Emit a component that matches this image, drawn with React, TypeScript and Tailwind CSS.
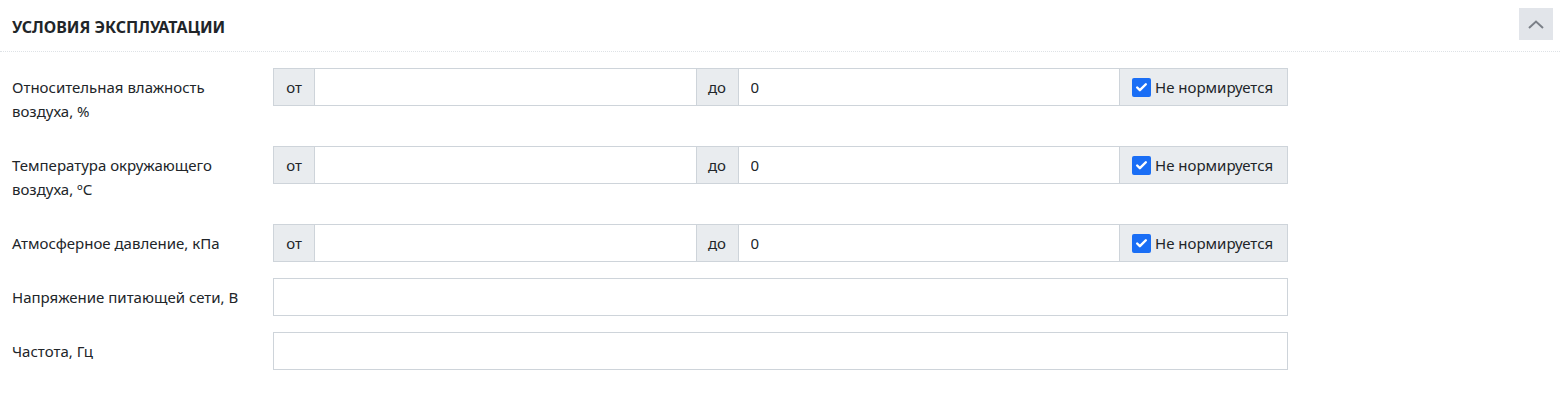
import { Check } from "lucide-react";

const font = { fontFamily: '"Segoe UI", "Noto Sans", "Open Sans", sans-serif' };

function Addon({ children, className = "" }: { children: React.ReactNode; className?: string }) {
  return (
    <div
      className={`flex items-center justify-center bg-[#e9ecef] border border-[#ced4da] text-[15px] text-[#212529] ${className}`}
    >
      {children}
    </div>
  );
}

function RangeGroup() {
  return (
    <div className="flex h-[38px] w-[1015px]">
      <Addon className="w-[42px]">от</Addon>
      <input
        className="flex-1 min-w-0 border-y border-[#ced4da] px-3 text-[15px] outline-none"
        defaultValue=""
      />
      <Addon className="w-[43px]">до</Addon>
      <input
        className="flex-1 min-w-0 border-y border-[#ced4da] px-3 text-[15px] text-[#212529] outline-none"
        defaultValue="0"
      />
      <Addon className="w-[169px] justify-start pl-3 gap-1">
        <span className="flex h-[19px] w-[19px] items-center justify-center rounded-[2px] bg-[#1a6ef5]">
          <Check size={13} strokeWidth={4.5} className="text-white" />
        </span>
        Не нормируется
      </Addon>
    </div>
  );
}

function Row({ label, children }: { label: React.ReactNode; children: React.ReactNode }) {
  return (
    <div className="flex items-start">
      <div className="w-[261px] py-[7px] pr-4 text-[15px] leading-6 text-[#212529]">{label}</div>
      {children}
    </div>
  );
}

export default function App() {
  return (
    <div className="min-h-[400px] w-[1560px] bg-white" style={font}>
      <div className="flex items-center justify-between border-b border-dotted border-[#dee2e6] pl-3 pr-[7px] pt-2 pb-[11px]">
        <h2 className="pt-[5px] text-[16px] font-bold uppercase text-[#212529]">Условия эксплуатации</h2>
        <button
          type="button"
          className="flex h-8 w-[34px] items-center justify-center bg-[#e2e5ea] text-[#7b8088]"
        >
          <svg width="16" height="9" viewBox="0 0 16 9" fill="none">
            <path d="M1 8 L8 1.5 L15 8" stroke="currentColor" strokeWidth="2" />
          </svg>
        </button>
      </div>

      <div className="flex flex-col gap-4 px-3 pt-4">
        <Row label={<>Относительная влажность<br />воздуха, %</>}>
          <RangeGroup />
        </Row>
        <Row label={<>Температура окружающего<br />воздуха, ºС</>}>
          <RangeGroup />
        </Row>
        <Row label="Атмосферное давление, кПа">
          <RangeGroup />
        </Row>
        <Row label="Напряжение питающей сети, В">
          <input className="h-[38px] w-[1015px] border border-[#ced4da] px-3 text-[15px] outline-none" />
        </Row>
        <Row label="Частота, Гц">
          <input className="h-[38px] w-[1015px] border border-[#ced4da] px-3 text-[15px] outline-none" />
        </Row>
      </div>
    </div>
  );
}
